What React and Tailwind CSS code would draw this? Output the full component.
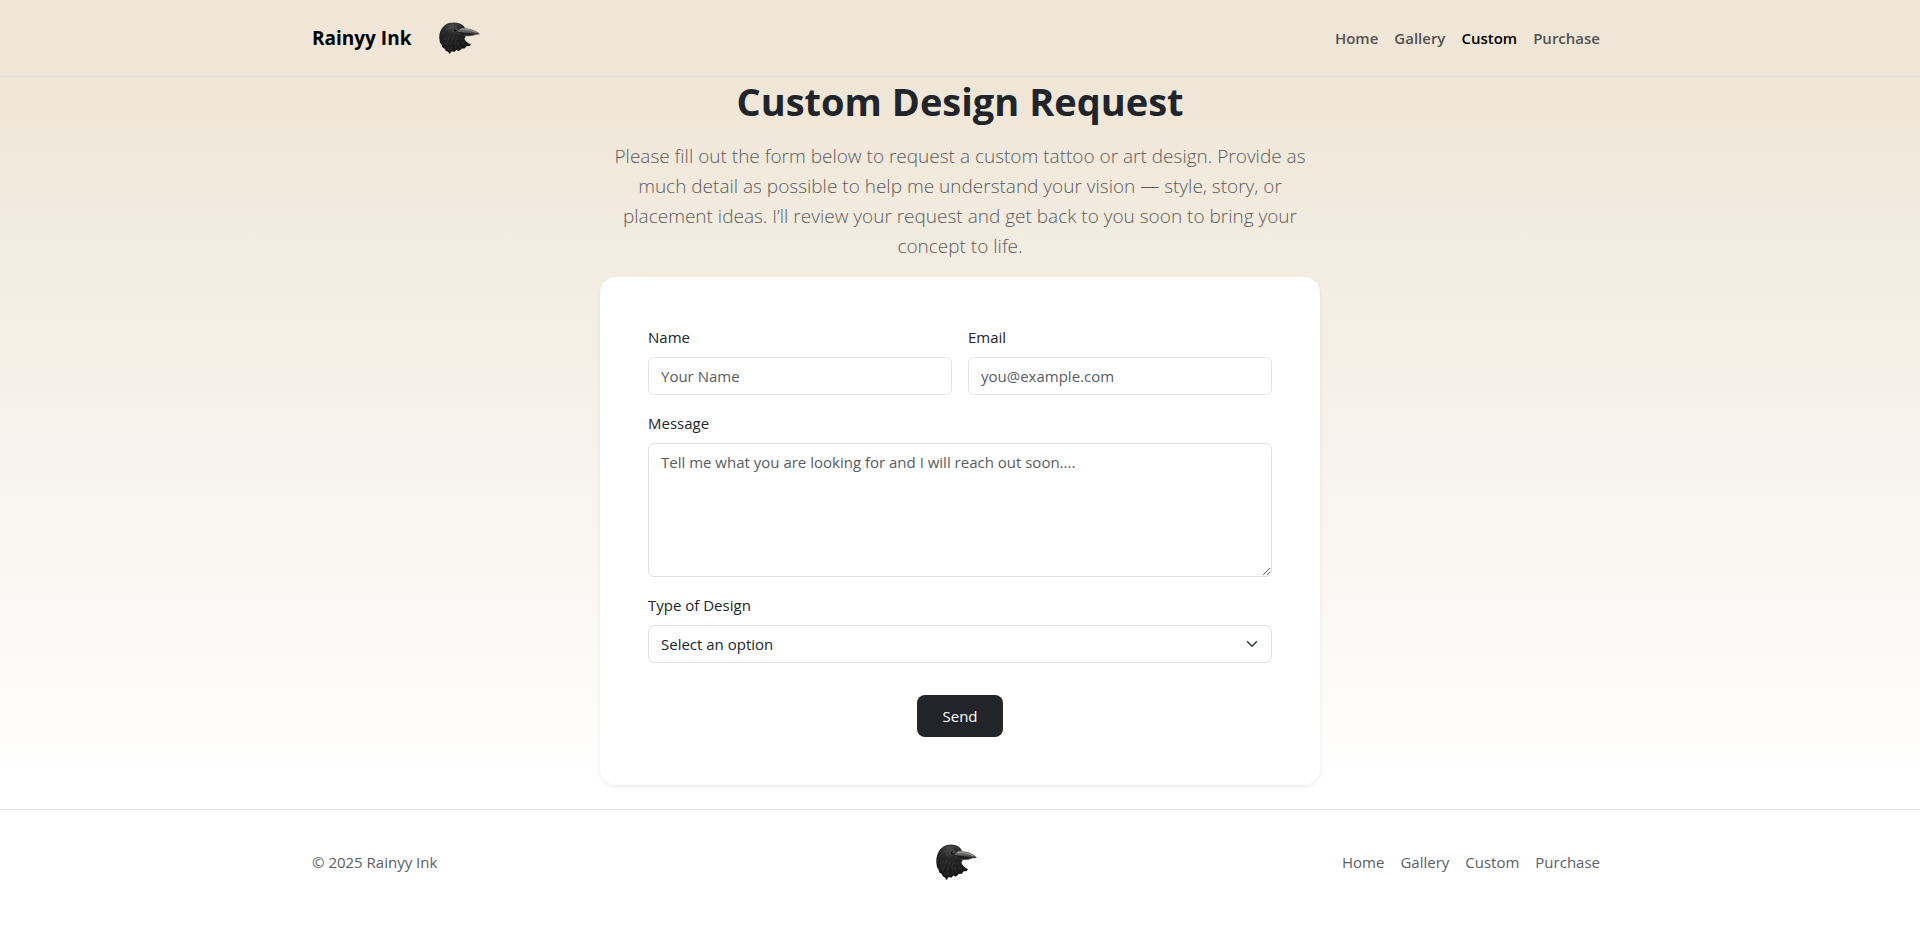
import React from "react";

const links = ["Home", "Gallery", "Custom", "Purchase"];

function Crow({ className }) {
  return (
    <svg viewBox="0 0 123 96" preserveAspectRatio="none" className={className} role="img" aria-label="Raven head">
      <defs>
        <linearGradient id="beak" x1="0" y1="0" x2="0" y2="1">
          <stop offset="0" stopColor="#8b8987" />
          <stop offset="0.5" stopColor="#5a5958" />
          <stop offset="1" stopColor="#242424" />
        </linearGradient>
        <radialGradient id="crown" cx="0.42" cy="0.14" r="0.75">
          <stop offset="0" stopColor="#4a4a4a" />
          <stop offset="0.35" stopColor="#282828" />
          <stop offset="1" stopColor="#181818" />
        </radialGradient>
      </defs>
      <path
        d="M1 50C-1 28 12 8 30 3C48 -1 66 2 75 13L80 22L82 40L76 50C79 57 86 62 96 68L92 72L82 73L78 79L68 80L60 87L52 84L46 90L38 88L32 96L27 89L20 86L17 80L10 76L7 67L3 62Z"
        fill="url(#crown)"
      />
      <path d="M72 18C88 18 112 24 123 37L108 38C97 42 86 43 76 41L57 35C55 27 60 19 72 18Z" fill="url(#beak)" />
      <path d="M52 30C68 29 84 33 110 36C95 42 84 42 72 39Z" fill="#1e1e1e" />
      <path d="M66 23C80 19 96 25 112 31" stroke="#9b9894" strokeWidth="3" fill="none" />
      <path d="M76 41C88 43 98 41 110 38" stroke="#6f6d6b" strokeWidth="2" fill="none" />
      <circle cx="49" cy="24" r="6" fill="#0b0b0b" stroke="#555" strokeWidth="2" />
      <circle cx="51" cy="22" r="2" fill="#8a8a8a" />
      <g stroke="#5b5b5b" strokeWidth="2" fill="none" opacity="0.55">
        <path d="M14 21Q26 7 45 9M10 33Q21 18 38 17M52 8Q64 9 70 14" />
        <path d="M21 46l-5 9M32 43l-5 11M43 46l-6 10M54 49l-6 9" />
        <path d="M14 59l5 10M26 58l-4 13M37 60l-3 11M47 60l3 10M58 61l-3 10M68 60l8 8" />
        <path d="M26 75l3 9M37 75l-2 9M48 74l3 6M60 73l4 6" />
      </g>
    </svg>
  );
}

const field =
  "block w-full rounded-md border border-[#dee2e6] bg-white px-3 py-[6px] text-[15px] leading-6 text-[#212529] placeholder:text-[#595c5f] placeholder:opacity-100";

export default function App() {
  return (
    <div className="min-h-screen bg-white font-['Open_Sans','Noto_Sans',sans-serif] text-[15px] leading-6 text-[#212529]">
      <div className="bg-linear-to-b from-[#efe6d7] from-10% to-white to-97%">
        <header className="border-b border-[#dee2e6] bg-[#efe6d7]">
          <div className="mx-auto flex h-[76px] max-w-[1320px] items-center justify-between pr-5 pl-3">
            <a href="#home" className="flex items-center gap-7 text-[19px] font-bold text-black">
              Rainyy Ink
              <Crow className="h-8 w-[41px]" />
            </a>
            <nav className="flex gap-4 font-semibold" aria-label="Main">
              {links.map((l) => (
                <a key={l} href={"#" + l.toLowerCase()} className={l === "Custom" ? "text-black" : "text-[#545250]"}>
                  {l}
                </a>
              ))}
            </nav>
          </div>
        </header>

        <main className="mx-auto max-w-[720px] pb-6">
          <h1 className="mb-4 text-center text-[38px] leading-12 font-bold">Custom Design Request</h1>
          <p className="mb-4 px-2 text-center text-[19px] leading-[30px] font-light text-[#5c5b5d]">
            Please fill out the form below to request a custom tattoo or art design. Provide as much detail as
            possible to help me understand your vision — style, story, or placement ideas. I’ll review your request
            and get back to you soon to bring your concept to life.
          </p>

          <form
            className="flex flex-col gap-4 rounded-2xl bg-white p-12 shadow-[0_2px_4px_rgba(0,0,0,0.075)]"
            onSubmit={(e) => e.preventDefault()}
          >
            <div className="grid grid-cols-2 gap-4">
              <div className="flex flex-col gap-2">
                <label htmlFor="name">Name</label>
                <input id="name" type="text" placeholder="Your Name" className={field} />
              </div>
              <div className="flex flex-col gap-2">
                <label htmlFor="email">Email</label>
                <input id="email" type="email" placeholder="you@example.com" className={field} />
              </div>
            </div>
            <div className="flex flex-col gap-2">
              <label htmlFor="message">Message</label>
              <textarea
                id="message"
                rows={5}
                placeholder="Tell me what you are looking for and I will reach out soon...."
                className={field + " resize-y"}
              />
            </div>
            <div className="flex flex-col gap-2">
              <label htmlFor="type">Type of Design</label>
              <div className="relative">
                <select id="type" className={field + " appearance-none pr-9"}>
                  <option>Select an option</option>
                  <option>Tattoo</option>
                  <option>Art</option>
                </select>
                <svg
                  viewBox="0 0 16 16"
                  className="pointer-events-none absolute inset-y-0 right-3 my-auto h-3 w-4"
                  aria-hidden="true"
                >
                  <path
                    d="m2 5 6 6 6-6"
                    fill="none"
                    stroke="#343a40"
                    strokeWidth="2"
                    strokeLinecap="round"
                    strokeLinejoin="round"
                  />
                </svg>
              </div>
            </div>
            <button type="submit" className="mt-4 self-center rounded-lg bg-[#212529] px-[25px] py-[9px] text-white">
              Send
            </button>
          </form>
        </main>
      </div>

      <footer className="border-t border-[#dee2e6] bg-white">
        <div className="mx-auto flex h-[104px] max-w-[1320px] items-center justify-between pr-5 pl-3 text-[#5c6066]">
          <span className="flex-1">© 2025 Rainyy Ink</span>
          <Crow className="h-9 w-[41px]" />
          <nav className="flex flex-1 justify-end gap-4" aria-label="Footer">
            {links.map((l) => (
              <a key={l} href={"#" + l.toLowerCase()}>
                {l}
              </a>
            ))}
          </nav>
        </div>
      </footer>
    </div>
  );
}
